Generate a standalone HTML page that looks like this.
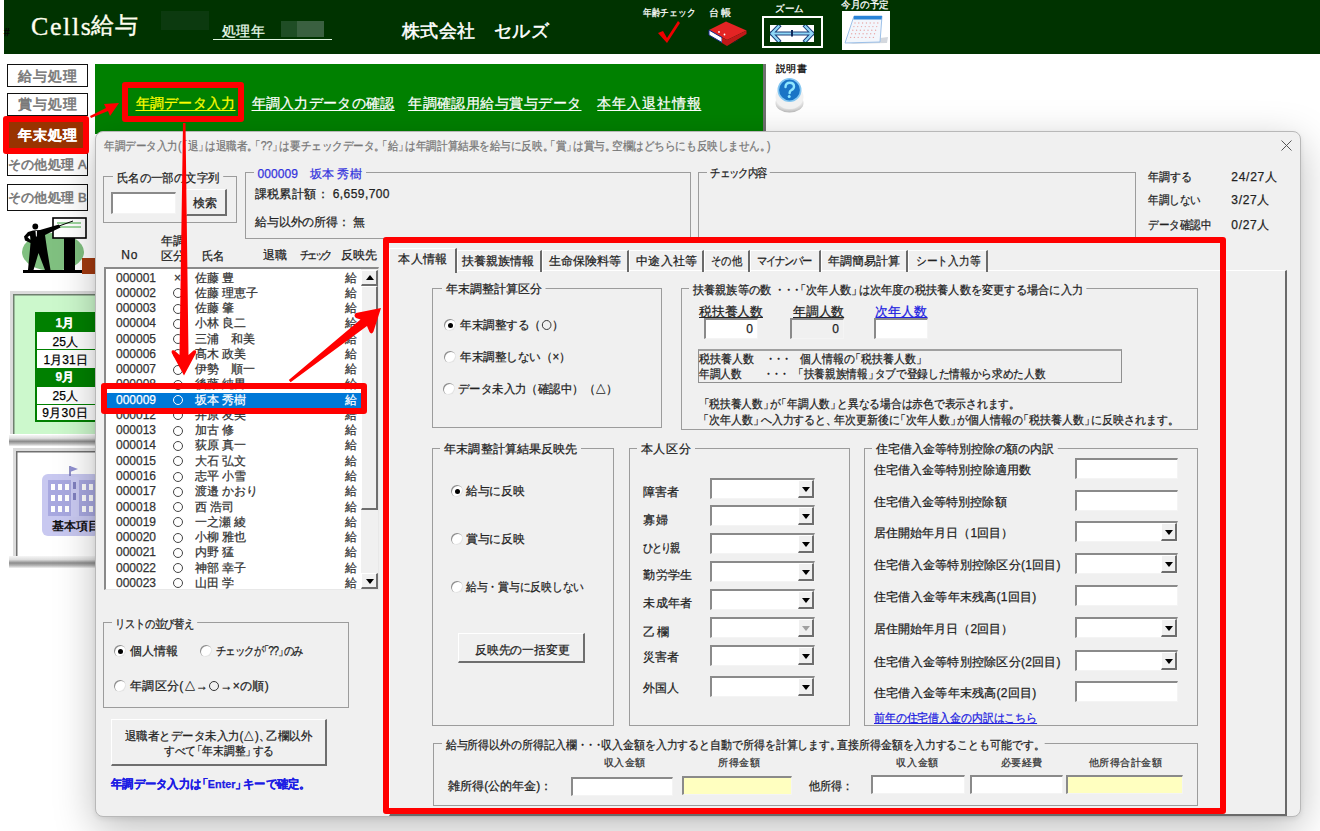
<!DOCTYPE html>
<html><head><meta charset="utf-8">
<style>
*{box-sizing:border-box;margin:0;padding:0}
html,body{width:1320px;height:831px;overflow:hidden;background:#fff}
body{position:relative;font-family:"Liberation Sans",sans-serif;font-size:12px;color:#222;-webkit-text-stroke:0.25px currentColor}
.a{position:absolute;white-space:nowrap}
.t{position:absolute;white-space:nowrap;line-height:1}
/* header */
#top{left:4px;top:0;width:1316px;height:54px;background:#003300}
.nav{position:absolute;white-space:nowrap;left:7px;width:81px;height:23px;border:1px solid #111;background:#fff;color:#7a7a7a;font-size:14px;text-align:center;line-height:21px;-webkit-text-stroke:0.6px #7a7a7a}
/* dialog controls */
.grp{position:absolute;border:1px solid #9c9c9c}
.gt{position:absolute;top:-8px;padding:0 3px;line-height:14px;white-space:nowrap;color:#222}
.inp{position:absolute;background:#fff;border-top:2px solid #8a8a8a;border-left:2px solid #8a8a8a;border-right:1px solid #f4f4f4;border-bottom:1px solid #f4f4f4}
.btn{position:absolute;background:#f0f0f0;border-top:1px solid #fff;border-left:1px solid #fff;border-right:2px solid #6e6e6e;border-bottom:2px solid #6e6e6e;text-align:center;color:#222}
.cmb{position:absolute;background:#fff;border-top:2px solid #8a8a8a;border-left:2px solid #8a8a8a;border-right:1px solid #f4f4f4;border-bottom:1px solid #f4f4f4}
.cmb i{position:absolute;right:0;top:0;bottom:0;width:16px;background:#f0f0f0;border-top:1px solid #fff;border-left:1px solid #fff;border-right:2px solid #6e6e6e;border-bottom:2px solid #6e6e6e}
.cmb i:after{content:"";position:absolute;left:3px;top:6px;border-left:4px solid transparent;border-right:4px solid transparent;border-top:5px solid #000}
.cmb.dis i:after{border-top-color:#a0a0a0}
.rad{position:absolute;width:12px;height:12px;border-radius:50%;background:#fff;box-shadow:inset 1px 1px 0 #8c8c8c,inset -1px -1px 0 #e4e4e4}
.rad.on:after{content:"";position:absolute;left:3.5px;top:3.5px;width:5px;height:5px;border-radius:50%;background:#000}
.row{position:absolute;left:0;height:15px;width:255px;line-height:15px;font-size:12px;color:#333}
.row span{position:absolute;top:0}
.tab{position:absolute;white-space:nowrap;top:250px;height:22px;border-top:1px solid #fff;border-left:1px solid #fff;border-right:2px solid #6a6a6a;text-align:center;line-height:20px;font-size:12px;color:#222}
.oc{position:absolute;left:0;top:2.5px;width:10px;height:10px;border:1px solid #444;border-radius:50%}
.row.sel .oc{border-color:#fff}
.ci{display:inline-block;width:10px;height:10px;border:1px solid #333;border-radius:50%;vertical-align:-1px;margin:0 1px}
.dots{letter-spacing:-3px}
.bq{margin-left:-5px}
.eq{margin-right:-4px}
.f{display:inline-block;position:relative;transform-origin:0 50%;white-space:nowrap;text-decoration:inherit}
.gt .f{background:#f0f0f0;padding:0 4px;margin:0 -4px}
.lbl{position:absolute;white-space:nowrap;line-height:14px;font-size:12px;color:#222}
</style></head><body>

<!-- HEADER -->
<div class="a" id="top"></div>
<div class="t" style="left:4px;top:28px;font-size:10px;color:#000">#</div>
<div class="t" style="left:31px;top:14px;font-family:'Liberation Serif',serif;font-size:26px;color:#fffff0;letter-spacing:1.6px;-webkit-text-stroke:0.3px #fffff0">Cells</div><div class="t" style="left:91px;top:14px;font-family:'Liberation Serif',serif;font-size:23px;color:#fffff0;letter-spacing:1px;-webkit-text-stroke:0.4px #fffff0">給与</div>
<div class="a" style="left:161px;top:11px;width:48px;height:19px;background:#0c3a0f"></div>
<div class="t" style="left:222px;top:24px;font-size:14px;color:#eefff0"><span class="f" style="letter-spacing: 0.8px; left: -0.5px; top: 0.2px;">処理年</span></div>
<div class="a" style="left:281px;top:21px;width:16px;height:16px;background:#1f4d25"></div>
<div class="a" style="left:297px;top:21px;width:27px;height:16px;background:#3a6040"></div>
<div class="a" style="left:213px;top:39px;width:119px;height:1px;background:#dff5e0"></div>
<div class="t" style="left:402px;top:22px;font-size:18px;color:#fff;-webkit-text-stroke:0.5px #fff"><span class="f" style="letter-spacing: 0.39px; left: -0.2px; top: -0.2px;">株式会社　セルズ</span></div>

<!-- header icons -->
<div class="t" style="left:643px;top:7px;font-size:10px;color:#fff"><span class="f" style="transform: scaleX(0.871); letter-spacing: 0.03px; left: -0.5px; top: 0.5px;">年齢チェック</span></div>
<svg class="a" style="left:656px;top:19px" width="26" height="26" viewBox="0 0 26 26"><path d="M2 14 L7 12 L11 19 L22 2 L24 4 L11 24 Z" fill="#e00"></path></svg>
<div class="t" style="left:710px;top:7px;font-size:10px;color:#fff"><span class="f" style="letter-spacing: 1.2px; left: -0.7px; top: 0.5px;">台帳</span></div>
<svg class="a" style="left:706px;top:20px" width="42" height="28" viewBox="706 20 42 28"><path d="M709 30 L726 21.5 L746.5 30.5 L727 40 Z" fill="#e42424"></path><path d="M709 30 L722 37.5 L722 42.5 L709 35 Z" fill="#fff" stroke="#1a2a90" stroke-width="1"></path><path d="M722 37.5 L727 40 L746.5 30.5 L746.5 34 L727 46 L722 43 Z" fill="#c01818"></path><circle cx="719" cy="32" r="0.9" fill="#fff"></circle><circle cx="724.5" cy="34.5" r="0.9" fill="#fff"></circle><path d="M733 43 L738 40" stroke="#222" stroke-width="1"></path></svg>
<div class="t" style="left:775px;top:4px;font-size:10px;color:#fff"><span class="f" style="transform: scaleX(0.959); left: -0.5px; top: 0.1px;">ズーム</span></div>
<div class="a" style="left:762px;top:16px;width:61px;height:32px;border:2px solid #fff"></div>
<div class="a" style="left:770px;top:25px;width:44px;height:17px;background:#fff"></div>
<svg class="a" style="left:770px;top:25px" width="44" height="17" viewBox="770 25 44 17"><g fill="none" stroke-linecap="square"><path d="M778.6 26.4 L771.8 33.5 L778.6 40.8 M805.5 26.4 L812.4 33.5 L805.5 40.8 M772 33.5 L812 33.5" stroke="#1c3f78" stroke-width="4.2"></path><path d="M778.6 26.4 L771.8 33.5 L778.6 40.8 M805.5 26.4 L812.4 33.5 L805.5 40.8 M772 33.5 L812 33.5" stroke="#8fd8f8" stroke-width="2.2"></path></g><rect x="791" y="30" width="2" height="6.5" fill="#0f2a5a"></rect></svg>
<div class="t" style="left:841px;top:0px;font-size:10px;color:#fff"><span class="f" style="transform: scaleX(0.959); left: 0.2px; top: 0.1px;">今月の予定</span></div>
<div class="a" style="left:842px;top:11px;width:48px;height:39px;background:#fff"></div>
<svg class="a" style="left:842px;top:11px" width="48" height="39" viewBox="842 11 48 39"><path d="M880 38 L888 37 L887 43 L848 44 Z" fill="#d4d8de"></path><path d="M854 16 L882 16 L880 42 L845 43 Z" fill="#f2f6fc" stroke="#9cc0e8" stroke-width="1"></path><path d="M854 16 L882 16 L881.6 19.5 L853.5 19.5 Z" fill="#2a84d8"></path><circle cx="855.0" cy="23.0" r="0.7" fill="#e8a8a8"></circle><circle cx="858.8" cy="23.0" r="0.7" fill="#e8a8a8"></circle><circle cx="862.6" cy="23.0" r="0.7" fill="#e8a8a8"></circle><circle cx="866.4" cy="23.0" r="0.7" fill="#e8a8a8"></circle><circle cx="870.2" cy="23.0" r="0.7" fill="#e8a8a8"></circle><circle cx="874.0" cy="23.0" r="0.7" fill="#e8a8a8"></circle><circle cx="877.8" cy="23.0" r="0.7" fill="#e8a8a8"></circle><circle cx="853.9" cy="26.6" r="0.7" fill="#e8a8a8"></circle><circle cx="857.7" cy="26.6" r="0.7" fill="#e8a8a8"></circle><circle cx="861.5" cy="26.6" r="0.7" fill="#e8a8a8"></circle><circle cx="865.3" cy="26.6" r="0.7" fill="#e8a8a8"></circle><circle cx="869.1" cy="26.6" r="0.7" fill="#e8a8a8"></circle><circle cx="872.9" cy="26.6" r="0.7" fill="#e8a8a8"></circle><circle cx="876.7" cy="26.6" r="0.7" fill="#e8a8a8"></circle><circle cx="852.8" cy="30.2" r="0.7" fill="#e8a8a8"></circle><circle cx="856.6" cy="30.2" r="0.7" fill="#e8a8a8"></circle><circle cx="860.4" cy="30.2" r="0.7" fill="#e8a8a8"></circle><circle cx="864.2" cy="30.2" r="0.7" fill="#e8a8a8"></circle><circle cx="868.0" cy="30.2" r="0.7" fill="#e8a8a8"></circle><circle cx="871.8" cy="30.2" r="0.7" fill="#e8a8a8"></circle><circle cx="875.6" cy="30.2" r="0.7" fill="#e8a8a8"></circle><circle cx="851.7" cy="33.8" r="0.7" fill="#e8a8a8"></circle><circle cx="855.5" cy="33.8" r="0.7" fill="#e8a8a8"></circle><circle cx="859.3" cy="33.8" r="0.7" fill="#e8a8a8"></circle><circle cx="863.1" cy="33.8" r="0.7" fill="#e8a8a8"></circle><circle cx="866.9" cy="33.8" r="0.7" fill="#e8a8a8"></circle><circle cx="870.7" cy="33.8" r="0.7" fill="#e8a8a8"></circle><circle cx="874.5" cy="33.8" r="0.7" fill="#e8a8a8"></circle><circle cx="850.6" cy="37.4" r="0.7" fill="#e8a8a8"></circle><circle cx="854.4" cy="37.4" r="0.7" fill="#e8a8a8"></circle><circle cx="858.2" cy="37.4" r="0.7" fill="#e8a8a8"></circle><circle cx="862.0" cy="37.4" r="0.7" fill="#e8a8a8"></circle><circle cx="865.8" cy="37.4" r="0.7" fill="#e8a8a8"></circle><circle cx="869.6" cy="37.4" r="0.7" fill="#e8a8a8"></circle><circle cx="873.4" cy="37.4" r="0.7" fill="#e8a8a8"></circle></svg>

<!-- LEFT NAV -->
<div class="nav" style="top:64px"><span class="f" style="letter-spacing: 1.13px; left: 0.27px; top: 0.5px;">給与処理</span></div>
<div class="nav" style="top:93px"><span class="f" style="letter-spacing: 1.13px; left: 0.27px; top: 0.4px;">賞与処理</span></div>
<div class="a" style="left:9px;top:122px;width:76px;height:26px;background:#993300;color:#fff;font-size:14px;font-weight:bold;text-align:center;line-height:26px"><span class="f" style="letter-spacing: 1.23px; left: 0.97px; top: 0.3px;">年末処理</span></div>
<div class="nav" style="top:153px;font-size:13px"><span class="f" style="letter-spacing: 0.3px; left: -0.4px; top: -0.5px;">その他処理 A</span></div>
<div class="nav" style="top:184px;font-size:13px;height:27px;line-height:25px"><span class="f" style="letter-spacing: 0.3px; left: -0.4px; top: 0px;">その他処理 B</span></div>

<!-- illustration -->
<svg class="a" style="left:20px;top:216px" width="76" height="60" viewBox="0 0 76 60">
<ellipse cx="33" cy="36" rx="31" ry="19" fill="#80c080"></ellipse>
<rect x="33" y="2" width="33" height="20" fill="#fff" stroke="#000" stroke-width="1.6"></rect>
<rect x="37" y="6" width="24" height="2" fill="#9ed59e"></rect><rect x="37" y="10" width="24" height="2" fill="#9ed59e"></rect>
<rect x="44" y="22" width="11" height="33" fill="#000"></rect>
<path d="M13 14.5 L20 14 L39 8.5 L40.5 11.5 L25 19 L27 33 L30.5 54 L25 54 L18.5 37 L13.5 54 L8 54 L10 33 L10.5 27 L5 24.5 L4 20.5 L8 16 Z M10 19.5 L7.5 21 L10.5 24 Z" fill="#000" fill-rule="evenodd"></path><path d="M39 10 L53 5" stroke="#000" stroke-width="1"></path><path d="M15.5 15 L17 15 L16.8 20 L16 21 Z" fill="#fff"></path>
<circle cx="15.3" cy="10.5" r="2.9" fill="#000"></circle>
<rect x="3" y="54" width="64" height="3" fill="#000"></rect>
<rect x="62" y="42" width="14" height="16" fill="#a33a10"></rect>
</svg>

<!-- light green panel -->
<div class="a" style="left:10px;top:291px;width:90px;height:143px;background:#ccf8cc;border-top:3px solid #dcdcdc;border-left:3px solid #dcdcdc;box-shadow:inset 1.5px 1.5px 0 #6f7f6f"></div>
<div class="a" style="left:9px;top:435px;width:91px;height:11px;background:linear-gradient(#f6f6f6,#dedede 30%,#8c8c8c 58%,#b8b8b8 80%,#f2f2f2)"></div>
<div class="a" style="left:35px;top:312px;width:60px;height:110px;border:2px solid #008000;border-right:none;background:#fff">
 <div style="position:absolute;left:0;top:0;width:100%;height:18px;background:#008000;color:#fff;font-weight:bold;text-align:center;line-height:18px;font-size:12px"><span class="f" style="letter-spacing: 0.31px; left: -0.84px; top: -0.3px;">1月</span></div>
 <div style="position:absolute;left:0;top:18px;width:100%;height:18px;border-bottom:1px solid #008000;text-align:center;line-height:18px;font-size:12px;color:#000"><span class="f" style="letter-spacing: 0.12px; left: -0.64px; top: 1px;">25人</span></div>
 <div style="position:absolute;left:0;top:37px;width:100%;height:17px;text-align:center;line-height:17px;font-size:12px;color:#000"><span class="f" style="letter-spacing: 0.04px; left: -0.38px; top: 1px;">1月31日</span></div>
 <div style="position:absolute;left:0;top:54px;width:100%;height:19px;background:#008000;color:#fff;font-weight:bold;text-align:center;line-height:19px;font-size:12px"><span class="f" style="letter-spacing: 0.31px; left: -0.84px; top: -0.2px;">9月</span></div>
 <div style="position:absolute;left:0;top:73px;width:100%;height:18px;border-bottom:1px solid #008000;text-align:center;line-height:18px;font-size:12px;color:#000"><span class="f" style="letter-spacing: 0.12px; left: -0.64px; top: 0px;">25人</span></div>
 <div style="position:absolute;left:0;top:91px;width:100%;height:17px;text-align:center;line-height:17px;font-size:12px;color:#000"><span class="f" style="letter-spacing: 0.37px; left: -0.86px; top: 0px;">9月30日</span></div>
</div>
<!-- building panel -->
<div class="a" style="left:13px;top:448px;width:87px;height:108px;background:#fff;border-top:3px solid #dcdcdc;border-left:3px solid #dcdcdc;box-shadow:inset 1.5px 1.5px 0 #707070"></div>
<div class="a" style="left:9px;top:556px;width:91px;height:12px;background:linear-gradient(#f6f6f6,#dedede 30%,#8c8c8c 58%,#b8b8b8 80%,#f2f2f2)"></div>
<svg class="a" style="left:40px;top:464px" width="60" height="76" viewBox="0 0 60 76">
<rect x="2" y="10" width="58" height="62" rx="6" fill="#c8c8f0"></rect>
<path d="M30 2 L30 12" stroke="#7070b0" stroke-width="1.5"></path><path d="M30 2 L38 5 L30 8Z" fill="#9090d0"></path>
<rect x="8" y="16" width="50" height="36" fill="#a8a8e0"></rect><rect x="31" y="13" width="8" height="40" fill="#cacaf2"></rect><rect x="33" y="18" width="3" height="7" fill="#8080c0"></rect><rect x="33" y="29" width="3" height="7" fill="#8080c0"></rect>
<g fill="#fff"><rect x="11" y="20" width="4" height="6"></rect><rect x="18" y="20" width="4" height="6"></rect><rect x="25" y="20" width="4" height="6"></rect><rect x="42" y="20" width="4" height="6"></rect><rect x="49" y="20" width="4" height="6"></rect><rect x="11" y="31" width="4" height="6"></rect><rect x="18" y="31" width="4" height="6"></rect><rect x="25" y="31" width="4" height="6"></rect><rect x="42" y="31" width="4" height="6"></rect><rect x="49" y="31" width="4" height="6"></rect><rect x="11" y="42" width="4" height="6"></rect><rect x="18" y="42" width="4" height="6"></rect><rect x="25" y="42" width="4" height="6"></rect><rect x="42" y="42" width="4" height="6"></rect><rect x="49" y="42" width="4" height="6"></rect></g>
<text x="12" y="66" font-size="12" font-weight="bold" fill="#111">基本項目</text>
</svg>

<!-- GREEN MENU PANEL -->
<div class="a" style="left:95px;top:64px;width:671px;height:70px;background:#008000;border-right:3px solid #707070"></div>
<div class="t" style="left:136px;top:96px;font-size:14px;color:#ffff00;text-decoration:underline;text-underline-offset:2px"><span class="f" style="letter-spacing: 0.28px; left: -0.5px; top: -0.3px;">年調データ入力</span></div>
<div class="t" style="left:252px;top:96px;font-size:14px;color:#fff;text-decoration:underline;text-underline-offset:2px"><span class="f" style="letter-spacing: 0.33px; left: -0.5px; top: -0.3px;">年調入力データの確認</span></div>
<div class="t" style="left:409px;top:96px;font-size:14px;color:#fff;text-decoration:underline;text-underline-offset:2px"><span class="f" style="letter-spacing: 0.45px; left: -0.9px; top: -0.3px;">年調確認用給与賞与データ</span></div>
<div class="t" style="left:598px;top:96px;font-size:14px;color:#fff;text-decoration:underline;text-underline-offset:2px"><span class="f" style="letter-spacing: 0.87px; left: -0.7px; top: -0.3px;">本年入退社情報</span></div>
<div class="t" style="left:776px;top:64px;font-size:10px;color:#000"><span class="f" style="letter-spacing: 0.5px; left: -0.5px; top: 0.3px;">説明書</span></div>
<svg class="a" style="left:774px;top:77px" width="34" height="38" viewBox="0 0 34 38"><defs><radialGradient id="pd" cx="0.5" cy="0.3" r="0.7"><stop offset="0" stop-color="#ffffff"></stop><stop offset="0.7" stop-color="#e6e6e6"></stop><stop offset="1" stop-color="#b8b8b8"></stop></radialGradient></defs>
<ellipse cx="15.5" cy="26" rx="14" ry="9.5" fill="url(#pd)"></ellipse><ellipse cx="15.5" cy="20" rx="14" ry="12" fill="#f2f2f2"></ellipse>
<circle cx="15.5" cy="13" r="11.2" fill="#1a74c6" stroke="#86c8f2" stroke-width="1.6"></circle>
<path d="M11.5 10 Q11.5 5.8 15.8 5.8 Q20 5.8 20 9.5 Q20 12 17.2 13.2 Q15.6 14 15.6 16" fill="none" stroke="#8ee6ff" stroke-width="2.4" stroke-linecap="round"></path><circle cx="15.2" cy="19.5" r="1.5" fill="#8ee6ff"></circle>
</svg>

<!-- DIALOG -->
<div class="a" id="dlg" style="left:95px;top:131px;width:1206px;height:686px;background:#f0f0f0;border:1px solid #b8b8b8;border-radius:8px;box-shadow:0 12px 40px rgba(0,0,0,.26),0 2px 5px rgba(0,0,0,.08)"></div>
<div class="t" style="left:104px;top:139px;font-size:12px;color:#777"><span class="f" style="transform: scaleX(0.88); left: -0.5px; top: 0.5px;">年調データ入力(<span class="bq">「</span>退<span class="eq">」</span>は退職者<span class="eq">。</span><span class="bq">「</span>??<span class="eq">」</span>は要チェックデータ<span class="eq">。</span><span class="bq">「</span>給<span class="eq">」</span>は年調計算結果を給与に反映<span class="eq">。</span><span class="bq">「</span>賞<span class="eq">」</span>は賞与<span class="eq">。</span>空欄はどちらにも反映しません<span class="eq">。</span>)</span></div>
<svg class="a" style="left:1281px;top:140px" width="11" height="11"><path d="M0.5 0.5 L10.5 10.5 M10.5 0.5 L0.5 10.5" stroke="#555" stroke-width="1"></path></svg>

<!-- name search group -->
<div class="grp" style="left:103px;top:176px;width:134px;height:47px"><span class="gt" style="left:10px"><span class="f" style="transform: scaleX(0.95); left: 0.1px; top: 1.8px;">氏名の一部の文字列</span></span></div>
<div class="inp" style="left:111px;top:192px;width:65px;height:22px"></div>
<div class="btn" style="left:186px;top:189px;width:41px;height:27px"></div><div class="lbl" style="left:194px;top:196px"><span class="f" style="left: -0.7px; top: 0px;">検索</span></div>

<!-- employee group -->
<div class="grp" style="left:245px;top:172px;width:446px;height:67px"><span class="gt" style="left:9px;color:#3333dd"><span class="f" style="letter-spacing: 0.06px; left: -0.5px; top: 1.5px;">000009　坂本 秀樹</span></span></div>
<div class="lbl" style="left:255px;top:187px"><span class="f" style="letter-spacing: 0.42px; left: -0.5px; top: 0.2px;">課税累計額： 6,659,700</span></div>
<div class="lbl" style="left:255px;top:215px"><span class="f" style="transform: scaleX(0.988); left: -0.5px; top: 0px;">給与以外の所得： 無</span></div>

<!-- check group -->
<div class="grp" style="left:698px;top:172px;width:438px;height:70px"><span class="gt" style="left:8px"><span class="f" style="transform: scaleX(0.86); letter-spacing: -1.21px; left: 0.76px; top: 1.4px;">チェック内容</span></span></div>

<!-- counts -->
<div class="lbl" style="left:1149px;top:170px"><span class="f" style="transform: scaleX(0.913); letter-spacing: 0.03px; left: -0.7px; top: 0.4px;">年調する</span></div><div class="lbl" style="left:1232px;top:170px"><span class="f" style="letter-spacing: 0.73px; left: -0.7px; top: 0.4px;">24/27人</span></div>
<div class="lbl" style="left:1149px;top:193px"><span class="f" style="transform: scaleX(0.881); letter-spacing: 0.04px; left: -0.7px; top: 0.2px;">年調しない</span></div><div class="lbl" style="left:1232px;top:193px"><span class="f" style="letter-spacing: 0.69px; left: -0.7px; top: 0.2px;">3/27人</span></div>
<div class="lbl" style="left:1149px;top:218px"><span class="f" style="transform: scaleX(0.882); letter-spacing: 0.02px; left: -0.7px; top: 0.2px;">データ確認中</span></div><div class="lbl" style="left:1232px;top:218px"><span class="f" style="letter-spacing: 0.69px; left: -0.7px; top: 0.2px;">0/27人</span></div>

<!-- list headers -->
<div class="lbl" style="left:122px;top:248px"><span class="f" style="letter-spacing: 0.86px; left: -0.7px; top: 0.2px;">No</span></div>
<div class="lbl" style="left:162px;top:234px"><span class="f" style="left: -0.7px; top: 0.2px;">年調</span></div>
<div class="lbl" style="left:161px;top:249px"><span class="f" style="left: 0.3px; top: 0px;">区分</span></div>
<div class="lbl" style="left:202px;top:248px"><span class="f" style="transform: scaleX(0.948); letter-spacing: 0.05px; left: -0.1px; top: 0.5px;">氏名</span></div>
<div class="lbl" style="left:263px;top:248px"><span class="f" style="transform: scaleX(0.996); left: 0px; top: 0px;">退職</span></div>
<div class="lbl" style="left:301px;top:248px"><span class="f" style="transform: scaleX(0.86); letter-spacing: -3.56px; left: -0.6px; top: 0px;">チェック</span></div>
<div class="lbl" style="left:342px;top:248px"><span class="f" style="transform: scaleX(0.997); left: -0.7px; top: 0px;">反映先</span></div>

<!-- listbox -->
<div class="a" id="list" style="left:104px;top:267px;width:275px;height:323px;background:#fff;border-top:2px solid #8a8a8a;border-left:2px solid #8a8a8a;border-right:1px solid #e8e8e8;border-bottom:1px solid #e8e8e8;overflow:hidden">
 <div id="rows" style="position:absolute;left:0;top:3px;width:255px">
<div class="row" style="top:-1.5px"><span style="left:10px">000001</span><span style="left:68px">×</span><span style="left:89px">佐藤 豊</span><span style="left:239px">給</span></div>
<div class="row" style="top:13.77px"><span style="left:10px">000002</span><span style="left:67px"><i class="oc"></i></span><span style="left:89px">佐藤 理恵子</span><span style="left:239px">給</span></div>
<div class="row" style="top:29.04px"><span style="left:10px">000003</span><span style="left:67px"><i class="oc"></i></span><span style="left:89px">佐藤 肇</span><span style="left:239px">給</span></div>
<div class="row" style="top:44.31px"><span style="left:10px">000004</span><span style="left:67px"><i class="oc"></i></span><span style="left:89px">小林 良二</span><span style="left:239px">給</span></div>
<div class="row" style="top:59.58px"><span style="left:10px">000005</span><span style="left:67px"><i class="oc"></i></span><span style="left:89px">三浦　和美</span><span style="left:239px">給</span></div>
<div class="row" style="top:74.85px"><span style="left:10px">000006</span><span style="left:67px"><i class="oc"></i></span><span style="left:89px">髙木 政美</span><span style="left:239px">給</span></div>
<div class="row" style="top:90.12px"><span style="left:10px">000007</span><span style="left:67px"><i class="oc"></i></span><span style="left:89px">伊勢　順一</span><span style="left:239px">給</span></div>
<div class="row" style="top:105.39px"><span style="left:10px">000008</span><span style="left:67px"><i class="oc"></i></span><span style="left:89px">後藤 純男</span><span style="left:239px">給</span></div>
<div class="row sel" style="top:120.66px;background:#0078d7;color:#fff"><span style="left:10px">000009</span><span style="left:67px"><i class="oc"></i></span><span style="left:89px">坂本 秀樹</span><span style="left:239px">給</span></div>
<div class="row" style="top:135.93px"><span style="left:10px">000012</span><span style="left:67px"><i class="oc"></i></span><span style="left:89px">井原 友美</span><span style="left:239px">給</span></div>
<div class="row" style="top:151.2px"><span style="left:10px">000013</span><span style="left:67px"><i class="oc"></i></span><span style="left:89px">加古 修</span><span style="left:239px">給</span></div>
<div class="row" style="top:166.47px"><span style="left:10px">000014</span><span style="left:67px"><i class="oc"></i></span><span style="left:89px">荻原 真一</span><span style="left:239px">給</span></div>
<div class="row" style="top:181.74px"><span style="left:10px">000015</span><span style="left:67px"><i class="oc"></i></span><span style="left:89px">大石 弘文</span><span style="left:239px">給</span></div>
<div class="row" style="top:197.01px"><span style="left:10px">000016</span><span style="left:67px"><i class="oc"></i></span><span style="left:89px">志平 小雪</span><span style="left:239px">給</span></div>
<div class="row" style="top:212.28px"><span style="left:10px">000017</span><span style="left:67px"><i class="oc"></i></span><span style="left:89px">渡邉 かおり</span><span style="left:239px">給</span></div>
<div class="row" style="top:227.55px"><span style="left:10px">000018</span><span style="left:67px"><i class="oc"></i></span><span style="left:89px">西 浩司</span><span style="left:239px">給</span></div>
<div class="row" style="top:242.82px"><span style="left:10px">000019</span><span style="left:67px"><i class="oc"></i></span><span style="left:89px">一之瀬 綾</span><span style="left:239px">給</span></div>
<div class="row" style="top:258.09px"><span style="left:10px">000020</span><span style="left:67px"><i class="oc"></i></span><span style="left:89px">小柳 雅也</span><span style="left:239px">給</span></div>
<div class="row" style="top:273.36px"><span style="left:10px">000021</span><span style="left:67px"><i class="oc"></i></span><span style="left:89px">内野 猛</span><span style="left:239px">給</span></div>
<div class="row" style="top:288.63px"><span style="left:10px">000022</span><span style="left:67px"><i class="oc"></i></span><span style="left:89px">神部 幸子</span><span style="left:239px">給</span></div>
<div class="row" style="top:303.9px"><span style="left:10px">000023</span><span style="left:67px"><i class="oc"></i></span><span style="left:89px">山田 学</span><span style="left:239px">給</span></div>
</div>
 <div style="position:absolute;left:255px;top:0;width:17px;height:321px;background:#f0f0f0"></div>
 <div class="btn" style="left:255px;top:1px;width:17px;height:16px"></div>
 <div style="position:absolute;left:260px;top:6px;border-left:4px solid transparent;border-right:4px solid transparent;border-bottom:5px solid #000"></div>
 <div class="btn" style="left:255px;top:17px;width:17px;height:224px"></div>
 <div class="btn" style="left:255px;top:304px;width:17px;height:16px"></div>
 <div style="position:absolute;left:260px;top:310px;border-left:4px solid transparent;border-right:4px solid transparent;border-top:5px solid #000"></div>
</div>

<!-- sort group -->
<div class="grp" style="left:103px;top:622px;width:246px;height:86px"><span class="gt" style="left:9px"><span class="f" style="transform: scaleX(0.86); letter-spacing: -0.62px; left: -0.24px; top: 1.5px;">リストの並び替え</span></span></div>
<div class="rad on" style="left:114px;top:645px"></div><div class="lbl" style="left:130px;top:644px"><span class="f" style="letter-spacing: 0.07px; left: 0px; top: 0px;">個人情報</span></div>
<div class="rad" style="left:200px;top:645px"></div><div class="lbl" style="left:216px;top:644px"><span class="f" style="transform: scaleX(0.86); letter-spacing: -1.03px; left: -0.5px; top: 0px;">チェックが<span class="bq">「</span>??<span class="eq">」</span>のみ</span></div>
<div class="rad" style="left:114px;top:680px"></div><div class="lbl" style="left:130px;top:679px"><span class="f" style="letter-spacing: 0.34px; left: 0px; top: -0.5px;">年調区分(△→<i class="ci"></i>→×の順)</span></div>
<div class="btn" style="left:111px;top:719px;width:216px;height:47px"></div><div class="lbl" style="left:126px;top:729px"><span class="f" style="transform: scaleX(0.955); left: -0.7px; top: 0px;">退職者とデータ未入力(△)<span class="eq">、</span>乙欄以外</span></div><div class="lbl" style="left:165px;top:744px"><span class="f" style="transform: scaleX(0.894); left: -1px; top: 0.2px;">すべて<span class="bq">「</span>年末調整<span class="eq">」</span>する</span></div>
<div class="lbl" style="left:111px;top:777px;font-weight:bold;color:#1c1ce4;font-size:11.5px"><span class="f" style="transform: scaleX(0.94); left: 0px; top: -0.4px;">年調データ入力は<span class="bq">「</span>Enter<span class="eq">」</span>キーで確定<span class="eq">。</span></span></div>

<!-- TAB CONTROL -->
<div class="a" style="left:389px;top:270px;width:898px;height:546px;background:#f0f0f0;border-top:1px solid #fff;border-left:1px solid #fff;border-right:2px solid #6a6a6a;border-bottom:2px solid #6a6a6a"></div>
<div class="tab" style="left:389px;top:248px;width:68px;height:25px;background:#f0f0f0;line-height:22px"><span class="f" style="letter-spacing: 0.43px; left: 0.57px; top: -1.4px;">本人情報</span></div>
<div class="tab" style="left:457px;width:85px"><span class="f" style="letter-spacing: 0.06px; left: -1.01px; top: 0.1px;">扶養親族情報</span></div>
<div class="tab" style="left:542px;width:87px"><span class="f" style="letter-spacing: 0.06px; left: 0.09px; top: 0.1px;">生命保険料等</span></div>
<div class="tab" style="left:629px;width:75px"><span class="f" style="letter-spacing: 0.15px; left: 0.58px; top: 0px;">中途入社等</span></div>
<div class="tab" style="left:704px;width:46px"><span class="f" style="transform: scaleX(0.86); letter-spacing: 0.02px; left: 2.53px; top: 0px;">その他</span></div>
<div class="tab" style="left:750px;width:71px"><span class="f" style="transform: scaleX(0.86); letter-spacing: -1.45px; left: 3.76px; top: 0px;">マイナンバー</span></div>
<div class="tab" style="left:821px;width:87px"><span class="f" style="left: 0.2px; top: 0px;">年調簡易計算</span></div>
<div class="tab" style="left:908px;width:80px"><span class="f" style="transform: scaleX(0.892); left: 4.5px; top: 0px;">シート入力等</span></div>

<!-- 年末調整計算区分 -->
<div class="grp" style="left:432px;top:288px;width:230px;height:140px"><span class="gt" style="left:10px"><span class="f" style="transform: scaleX(0.995); left: -0.48px; top: 0.9px;">年末調整計算区分</span></span></div>
<div class="rad on" style="left:444px;top:319px"></div><div class="lbl" style="left:461px;top:318px"><span class="f" style="transform: scaleX(0.963); left: -0.9px; top: 0px;">年末調整する（<i class="ci"></i>）</span></div>
<div class="rad" style="left:444px;top:351px"></div><div class="lbl" style="left:461px;top:350px"><span class="f" style="transform: scaleX(0.963); left: -0.9px; top: -0.1px;">年末調整しない（×）</span></div>
<div class="rad" style="left:443px;top:383px"></div><div class="lbl" style="left:459px;top:382px"><span class="f" style="transform: scaleX(0.951); left: -0.8px; top: 0px;">データ未入力（確認中）（△）</span></div>

<!-- 扶養親族等の数 -->
<div class="grp" style="left:681px;top:288px;width:517px;height:142px"><span class="gt" style="left:9px"><span class="f" style="transform: scaleX(0.935); left: -0.54px; top: 1.8px;">扶養親族等の数 <span class="dots">・・・</span><span class="bq">「</span>次年人数<span class="eq">」</span>は次年度の税扶養人数を変更する場合に入力</span></span></div>
<div class="lbl" style="left:700px;top:304px;font-size:13px;text-decoration:underline"><span class="f" style="transform: scaleX(0.984); left: -0.9px; top: 0.9px;">税扶養人数</span></div>
<div class="lbl" style="left:793px;top:304px;font-size:13px;text-decoration:underline"><span class="f" style="transform: scaleX(0.984); left: -0.3px; top: 0.9px;">年調人数</span></div>
<div class="lbl" style="left:876px;top:304px;font-size:13px;text-decoration:underline;color:#2020e0"><span class="f" style="letter-spacing: 0.03px; left: -0.6px; top: 0.9px;">次年人数</span></div>
<div class="inp" style="left:704px;top:318px;width:54px;height:21px;text-align:right;padding-right:4px;line-height:18px">0</div>
<div class="inp" style="left:790px;top:318px;width:54px;height:21px;text-align:right;padding-right:4px;line-height:18px;background:#f0f0f0">0</div>
<div class="inp" style="left:874px;top:318px;width:54px;height:21px"></div>
<div class="a" style="left:698px;top:349px;width:424px;height:34px;border:1px solid #909090;border-top:2px solid #a0a0a0"></div>
<div class="lbl" style="left:699px;top:352px"><span class="f" style="transform: scaleX(0.911); left: -0.5px; top: -0.3px;">税扶養人数　<span class="dots">・・・</span>　個人情報の<span class="bq">「</span>税扶養人数<span class="eq">」</span></span></div>
<div class="lbl" style="left:699px;top:366px"><span class="f" style="transform: scaleX(0.888); left: -0.5px; top: 0.5px;">年調人数　　<span class="dots">・・・</span>　<span class="bq">「</span>扶養親族情報<span class="eq">」</span>タブで登録した情報から求めた人数</span></div>
<div class="lbl" style="left:699px;top:397px"><span class="f" style="transform: scaleX(0.895); left: 3.97px; top: 0px;"><span class="bq">「</span>税扶養人数<span class="eq">」</span>が<span class="bq">「</span>年調人数<span class="eq">」</span>と異なる場合は赤色で表示されます<span class="eq">。</span></span></div>
<div class="lbl" style="left:699px;top:413px"><span class="f" style="transform: scaleX(0.914); left: 4.07px; top: -0.2px;"><span class="bq">「</span>次年人数<span class="eq">」</span>へ入力すると<span class="eq">、</span>年次更新後に<span class="bq">「</span>次年人数<span class="eq">」</span>が個人情報の<span class="bq">「</span>税扶養人数<span class="eq">」</span>に反映されます<span class="eq">。</span></span></div>

<!-- 年末調整計算結果反映先 -->
<div class="grp" style="left:432px;top:448px;width:182px;height:278px"><span class="gt" style="left:9px"><span class="f" style="letter-spacing: 0.08px; left: -0.7px; top: 0.7px;">年末調整計算結果反映先</span></span></div>
<div class="rad on" style="left:451px;top:485px"></div><div class="lbl" style="left:466px;top:484px"><span class="f" style="transform: scaleX(0.978); left: 0px; top: 0px;">給与に反映</span></div>
<div class="rad" style="left:451px;top:533px"></div><div class="lbl" style="left:466px;top:532px"><span class="f" style="transform: scaleX(0.978); left: 0px; top: 0px;">賞与に反映</span></div>
<div class="rad" style="left:451px;top:581px"></div><div class="lbl" style="left:466px;top:580px"><span class="f" style="transform: scaleX(0.895); left: 0px; top: -0.4px;">給与・賞与に反映しない</span></div>
<div class="btn" style="left:458px;top:633px;width:127px;height:30px"></div><div class="lbl" style="left:475px;top:643px"><span class="f" style="transform: scaleX(0.983); left: -0.5px; top: -0.3px;">反映先の一括変更</span></div>

<!-- 本人区分 -->
<div class="grp" style="left:629px;top:448px;width:221px;height:278px"><span class="gt" style="left:9px"><span class="f" style="letter-spacing: 0.6px; left: -1.3px; top: 0.7px;">本人区分</span></span></div>
<div class="lbl" style="left:644px;top:485px"><span class="f" style="transform: scaleX(0.991); left: -0.7px; top: -0.3px;">障害者</span></div><div class="cmb" style="left:710px;top:478px;width:105px;height:21px"><i></i></div>
<div class="lbl" style="left:644px;top:513px"><span class="f" style="letter-spacing: 0.5px; left: -0.7px; top: -0.2px;">寡婦</span></div><div class="cmb" style="left:710px;top:505px;width:105px;height:21px"><i></i></div>
<div class="lbl" style="left:644px;top:541px"><span class="f" style="transform: scaleX(0.86); letter-spacing: -1.43px; left: -0.7px; top: 0px;">ひとり親</span></div><div class="cmb" style="left:710px;top:533px;width:105px;height:21px"><i></i></div>
<div class="lbl" style="left:644px;top:568px"><span class="f" style="letter-spacing: 0.27px; left: -0.7px; top: 0px;">勤労学生</span></div><div class="cmb" style="left:710px;top:561px;width:105px;height:21px"><i></i></div>
<div class="lbl" style="left:644px;top:596px"><span class="f" style="letter-spacing: 0.27px; left: -0.7px; top: -0.2px;">未成年者</span></div><div class="cmb" style="left:710px;top:589px;width:105px;height:21px"><i></i></div>
<div class="lbl" style="left:644px;top:625px"><span class="f" style="letter-spacing: 1.2px; left: -0.7px; top: -0.3px;">乙欄</span></div><div class="cmb dis" style="left:710px;top:617px;width:105px;height:21px"><i></i></div>
<div class="lbl" style="left:644px;top:650px"><span class="f" style="transform: scaleX(0.991); left: -0.7px; top: 0px;">災害者</span></div><div class="cmb" style="left:710px;top:645px;width:105px;height:21px"><i></i></div>
<div class="lbl" style="left:644px;top:681px"><span class="f" style="transform: scaleX(0.991); left: -0.7px; top: -0.4px;">外国人</span></div><div class="cmb" style="left:710px;top:676px;width:105px;height:21px"><i></i></div>

<!-- 住宅借入金 -->
<div class="grp" style="left:864px;top:448px;width:334px;height:278px"><span class="gt" style="left:9px"><span class="f" style="transform: scaleX(0.988); left: -1.25px; top: 0.7px;">住宅借入金等特別控除の額の内訳</span></span></div>
<div class="lbl" style="left:874px;top:463px"><span class="f" style="letter-spacing: 0.07px; left: -0.1px; top: 0.4px;">住宅借入金等特別控除適用数</span></div><div class="inp" style="left:1075px;top:458px;width:103px;height:21px"></div>
<div class="lbl" style="left:874px;top:495px"><span class="f" style="letter-spacing: 0.06px; left: -0.1px; top: -0.2px;">住宅借入金等特別控除額</span></div><div class="inp" style="left:1075px;top:490px;width:103px;height:21px"></div>
<div class="lbl" style="left:874px;top:526px"><span class="f" style="letter-spacing: 0.06px; left: -0.1px; top: 0.2px;">居住開始年月日（1回目）</span></div><div class="cmb" style="left:1075px;top:521px;width:103px;height:21px"><i></i></div>
<div class="lbl" style="left:874px;top:558px"><span class="f" style="letter-spacing: 0.25px; left: -0.1px; top: 0px;">住宅借入金等特別控除区分(1回目)</span></div><div class="cmb" style="left:1075px;top:553px;width:103px;height:21px"><i></i></div>
<div class="lbl" style="left:874px;top:590px"><span class="f" style="letter-spacing: 0.27px; left: -0.1px; top: 0.4px;">住宅借入金等年末残高(1回目)</span></div><div class="inp" style="left:1075px;top:585px;width:103px;height:21px"></div>
<div class="lbl" style="left:874px;top:622px"><span class="f" style="letter-spacing: 0.06px; left: -0.1px; top: 0.2px;">居住開始年月日（2回目）</span></div><div class="cmb" style="left:1075px;top:617px;width:103px;height:21px"><i></i></div>
<div class="lbl" style="left:874px;top:655px"><span class="f" style="letter-spacing: 0.25px; left: -0.1px; top: -0.4px;">住宅借入金等特別控除区分(2回目)</span></div><div class="cmb" style="left:1075px;top:650px;width:103px;height:21px"><i></i></div>
<div class="lbl" style="left:874px;top:686px"><span class="f" style="letter-spacing: 0.27px; left: -0.1px; top: 0px;">住宅借入金等年末残高(2回目)</span></div><div class="inp" style="left:1075px;top:681px;width:103px;height:21px"></div>
<div class="lbl" style="left:874px;top:711px;color:#2020e0;text-decoration:underline"><span class="f" style="transform: scaleX(0.906); left: -0.1px; top: 0.3px;">前年の住宅借入金の内訳はこちら</span></div>

<!-- 給与所得以外 -->
<div class="grp" style="left:433px;top:743px;width:765px;height:63px"><span class="gt" style="left:9px"><span class="f" style="transform: scaleX(0.909); left: -0.34px; top: 1.5px;">給与所得以外の所得記入欄<span class="dots">・・・</span>収入金額を入力すると自動で所得を計算します<span class="eq">。</span>直接所得金額を入力することも可能です<span class="eq">。</span></span></span></div>
<div class="lbl" style="left:604px;top:756px;font-size:10px;color:#333"><span class="f" style="letter-spacing: 0.53px; left: -0.3px; top: 0.2px;">収入金額</span></div>
<div class="lbl" style="left:718px;top:756px;font-size:10px;color:#333"><span class="f" style="letter-spacing: 0.63px; left: 0px; top: 0.2px;">所得金額</span></div>
<div class="lbl" style="left:896px;top:756px;font-size:10px;color:#333"><span class="f" style="letter-spacing: 0.83px; left: -0.1px; top: 0.2px;">収入金額</span></div>
<div class="lbl" style="left:1001px;top:756px;font-size:10px;color:#333"><span class="f" style="letter-spacing: 0.33px; left: 0px; top: 0.2px;">必要経費</span></div>
<div class="lbl" style="left:1089px;top:756px;font-size:10px;color:#333"><span class="f" style="letter-spacing: 0.47px; left: -0.1px; top: 0.2px;">他所得合計金額</span></div>
<div class="lbl" style="left:449px;top:779px"><span class="f" style="transform: scaleX(1); left: -0.7px; top: 0px;">雑所得(公的年金)：</span></div>
<div class="inp" style="left:571px;top:777px;width:102px;height:19px"></div>
<div class="inp" style="left:682px;top:776px;width:110px;height:19px;background:#ffffc0"></div>
<div class="lbl" style="left:810px;top:779px"><span class="f" style="transform: scaleX(0.921); letter-spacing: 0.03px; left: -0.8px; top: 0px;">他所得：</span></div>
<div class="inp" style="left:871px;top:775px;width:94px;height:19px"></div>
<div class="inp" style="left:970px;top:775px;width:93px;height:19px"></div>
<div class="inp" style="left:1066px;top:775px;width:117px;height:19px;background:#ffffc0"></div>

<!-- RED ANNOTATIONS -->
<svg class="a" style="left:0;top:0;pointer-events:none" width="1320" height="831" viewBox="0 0 1320 831">
<g fill="none" stroke="#ff0000" stroke-linejoin="round">
<rect x="6" y="119" width="80" height="32" rx="0" stroke-width="6"></rect>
<rect x="125" y="85" width="116" height="34" rx="0" stroke-width="6"></rect>
<rect x="104" y="386" width="260" height="25" rx="0" stroke-width="6"></rect>
<rect x="386" y="240" width="837" height="571" rx="0" stroke-width="6"></rect>
</g>
<g fill="#ff0000">
<path d="M90 116 L106 108 L104 104 L119 103 L110 116 L108 111 L91 118 Z"></path>
<path d="M183 123 L185.5 123 L188.5 355 L193.5 350.5 Q197 349.5 196 353 L184 375.5 L171.8 353 Q170.8 349.5 174.5 350.5 L179.5 355 Z"></path>
<path d="M381 308 L356 313 Q353 315.5 356 318 L360.5 319.5 L288.8 380 L290.6 382.2 L367 326 L369.5 332 Q371.5 335 373.5 331.5 Z"></path>
</g>
</svg>


</body></html>
